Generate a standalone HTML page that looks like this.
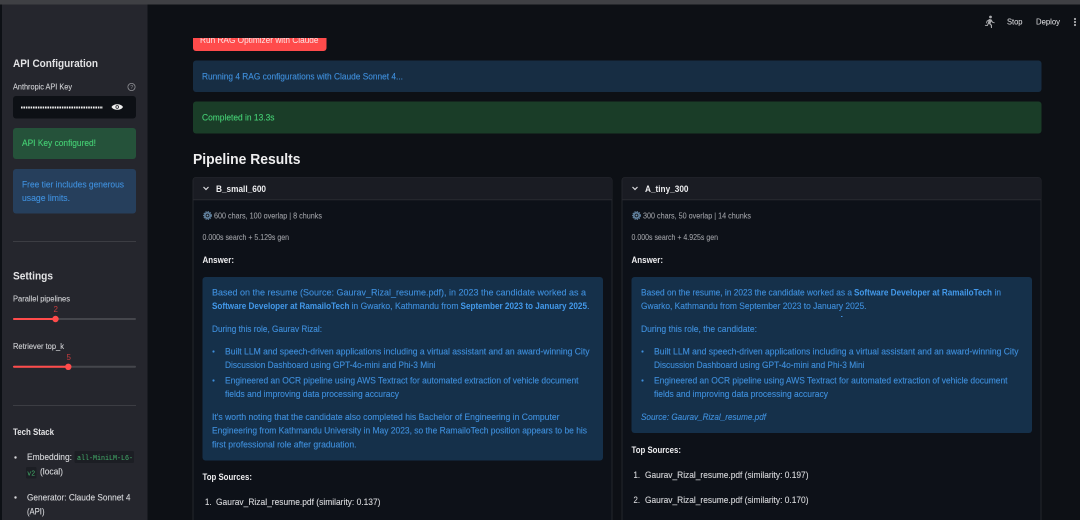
<!DOCTYPE html>
<html><head><meta charset="utf-8"><style>
html,body{margin:0;padding:0;width:1080px;height:520px;overflow:hidden;background:#0d1015}
svg{display:block;filter:blur(.3px)}
text{font-family:"Liberation Sans",sans-serif;font-size:9.1px;white-space:pre}
.b{font-weight:700}
.blue{fill:#3f8fdc;stroke:#3f8fdc;stroke-width:.12}
.blueb{fill:#4399ea;font-weight:700}
.t{fill:#d8d9dc;stroke:#d8d9dc;stroke-width:.1}
.s{fill:#a2a4a9;font-size:8.2px;stroke:#a2a4a9;stroke-width:.06}
.w{fill:#ececee;font-weight:700}
.side{fill:#d4d5d8;font-size:8.4px;stroke:#d4d5d8;stroke-width:.08}
.g{fill:#45cf74;stroke:#45cf74;stroke-width:.12}
</style></head><body>
<svg width="1080" height="520" viewBox="0 0 1080 520" xmlns="http://www.w3.org/2000/svg">
<rect width="1080" height="520" fill="#0d1015"/>
<rect x="2" y="4" width="145.500" height="516" fill="#25262d"/>
<rect x="0" y="0" width="1080" height="4.500" fill="#3f4044"/>

<!-- top right -->
<g fill="#a9aaad">
<circle cx="990.500" cy="17" r="1.400"/>
<path d="M989.500 19l2 .5 1.500 2.500 1.800.5-.2.8-2.300-.5-1-1.300-.8 2 1.500 1.500V28h-1l-.3-2.800-2-1.500-1 2.300-2.800-.2.100-.9 2.100.1 1.400-4-1.200.6-.5 1.800-.8-.2.600-2.300z"/>
<circle cx="1075" cy="19" r="1.100"/><circle cx="1075" cy="22" r="1.100"/><circle cx="1075" cy="25" r="1.100"/>
</g>
<text x="1007" y="24.500" class="side" textLength="15.500" lengthAdjust="spacingAndGlyphs">Stop</text>
<text x="1036" y="24.500" class="side" textLength="24" lengthAdjust="spacingAndGlyphs">Deploy</text>

<!-- main top -->
<path d="M193 38H326.500V48a3 3 0 0 1-3 3H196a3 3 0 0 1-3-3z" fill="#ff4b4b"/>
<clipPath id="c"><rect x="193" y="38" width="134" height="14"/></clipPath>
<text x="200" y="43" clip-path="url(#c)" fill="#fbe3e3" textLength="118.500" lengthAdjust="spacingAndGlyphs">Run RAG Optimizer with Claude</text>
<rect x="193" y="60.500" width="848.500" height="31.500" rx="3" fill="#172d43"/>
<text x="202" y="79.300" class="blue" textLength="201" lengthAdjust="spacingAndGlyphs">Running 4 RAG configurations with Claude Sonnet 4...</text>
<rect x="193" y="101.500" width="848.500" height="32" rx="3" fill="#1a3d28"/>
<text x="202" y="120.300" class="g" textLength="72.500" lengthAdjust="spacingAndGlyphs">Completed in 13.3s</text>
<text x="193" y="164" fill="#eeeeef" class="b" style="font-size:15px" textLength="107.500" lengthAdjust="spacingAndGlyphs">Pipeline Results</text>

<!-- sidebar -->
<text x="13" y="67" class="b" fill="#e3e3e5" style="font-size:11.200px" textLength="85" lengthAdjust="spacingAndGlyphs">API Configuration</text>
<text x="13" y="89.500" class="side" textLength="59" lengthAdjust="spacingAndGlyphs">Anthropic API Key</text>
<circle cx="131.500" cy="87" r="3.600" fill="none" stroke="#8f9095" stroke-width=".8"/>
<text x="130.200" y="89.200" fill="#8f9095" style="font-size:5.500px">?</text>
<rect x="13" y="96" width="123" height="22.500" rx="3" fill="#0d1015"/>
<line x1="21" y1="107.500" x2="103" y2="107.500" stroke="#f0f0f0" stroke-width="1.900" stroke-dasharray="1.600 .8"/>
<path d="M111.500 107c2-3.700 9.500-3.700 11.500 0-2 3.700-9.500 3.700-11.500 0z" fill="#eee"/>
<circle cx="117.200" cy="107" r="1.700" fill="#0d1015"/><circle cx="117.200" cy="107" r="1" fill="#eee"/>
<rect x="13" y="128" width="123" height="31" rx="3" fill="#25523a"/>
<text x="22" y="146" class="g" textLength="74" lengthAdjust="spacingAndGlyphs">API Key configured!</text>
<rect x="13" y="169" width="123" height="44.500" rx="3" fill="#263f5c"/>
<text x="22" y="187.500" class="blue" textLength="102" lengthAdjust="spacingAndGlyphs">Free tier includes generous</text>
<text x="22" y="201" class="blue" textLength="48" lengthAdjust="spacingAndGlyphs">usage limits.</text>
<line x1="13" y1="241.500" x2="136" y2="241.500" stroke="#3c3d43"/>
<text x="13" y="279.500" class="b" fill="#e3e3e5" style="font-size:11.200px" textLength="40" lengthAdjust="spacingAndGlyphs">Settings</text>
<text x="13" y="301.500" class="side" textLength="57" lengthAdjust="spacingAndGlyphs">Parallel pipelines</text>
<text x="53.500" y="312" fill="#c73c3e" style="font-size:8px">2</text>
<rect x="13" y="318" width="123" height="2" rx="1" fill="#45464c"/>
<rect x="13" y="318" width="42" height="2" rx="1" fill="#ff4b4b"/>
<circle cx="55.500" cy="319" r="3.200" fill="#ff4b4b"/>
<text x="13" y="349" class="side" textLength="51" lengthAdjust="spacingAndGlyphs">Retriever top_k</text>
<text x="66.500" y="360" fill="#c73c3e" style="font-size:8px">5</text>
<rect x="13" y="365.800" width="123" height="2" rx="1" fill="#45464c"/>
<rect x="13" y="365.800" width="55" height="2" rx="1" fill="#ff4b4b"/>
<circle cx="68.300" cy="366.800" r="3.200" fill="#ff4b4b"/>
<line x1="13" y1="405.500" x2="136" y2="405.500" stroke="#3c3d43"/>
<text x="13" y="435" class="b" fill="#e3e3e5" textLength="41" lengthAdjust="spacingAndGlyphs">Tech Stack</text>
<circle cx="15.500" cy="457.500" r="1.200" fill="#d8d8da"/>
<text x="27" y="460" class="t" textLength="45" lengthAdjust="spacingAndGlyphs">Embedding:</text>
<rect x="74.500" y="451" width="59.500" height="12" rx="1.500" fill="#1c1e24"/>
<text x="77" y="460" fill="#45b56d" style="font-family:'Liberation Mono',monospace;font-size:7.500px" textLength="56" lengthAdjust="spacingAndGlyphs">all-MiniLM-L6-</text>
<rect x="26" y="467" width="10.500" height="11.500" rx="1.500" fill="#1c1e24"/>
<text x="27.300" y="475.500" fill="#45b56d" style="font-family:'Liberation Mono',monospace;font-size:7.500px" textLength="7.800" lengthAdjust="spacingAndGlyphs">v2</text>
<text x="40" y="474.500" class="t" textLength="23" lengthAdjust="spacingAndGlyphs">(local)</text>
<circle cx="15.500" cy="497.500" r="1.200" fill="#d8d8da"/>
<text x="27" y="500.500" class="t" textLength="103.500" lengthAdjust="spacingAndGlyphs">Generator: Claude Sonnet 4</text>
<text x="27" y="514.500" class="t" textLength="17.500" lengthAdjust="spacingAndGlyphs">(API)</text>

<!-- left expander -->
<path d="M193 520V180.500a3 3 0 0 1 3-3H609a3 3 0 0 1 3 3V520" fill="#0d1118" stroke="#24262c" stroke-width="1"/>
<path d="M193.500 199.500V180.500a3 3 0 0 1 3-3H609a3 3 0 0 1 3 3V199.500z" fill="#1a1c23"/>
<line x1="193" y1="199.700" x2="612" y2="199.700" stroke="#292b31"/>
<path d="M203.500 187l2.500 2.500 2.500-2.500" fill="none" stroke="#dcdcdf" stroke-width="1.200"/>
<text x="216" y="191.800" class="w" style="font-size:8.800px" textLength="50" lengthAdjust="spacingAndGlyphs">B_small_600</text>
<g transform="translate(207.500,215.500)"><circle r="2.700" fill="none" stroke="#5f7f9c" stroke-width="1.700"/><circle r="3.900" fill="none" stroke="#5f7f9c" stroke-width="1.100" stroke-dasharray="1.300 1"/><circle r="1" fill="#7d9ab3"/></g>
<text x="214" y="218.500" class="s" textLength="108" lengthAdjust="spacingAndGlyphs">600 chars, 100 overlap | 8 chunks</text>
<text x="202.500" y="240" class="s" textLength="86.500" lengthAdjust="spacingAndGlyphs">0.000s search + 5.129s gen</text>
<text x="202.500" y="263" class="w" textLength="31.500" lengthAdjust="spacingAndGlyphs">Answer:</text>
<rect x="202.500" y="277" width="400.500" height="183.500" rx="3" fill="#15304a"/>
<text x="212" y="295.300" class="blue" textLength="374" lengthAdjust="spacingAndGlyphs">Based on the resume (Source: Gaurav_Rizal_resume.pdf), in 2023 the candidate worked as a</text>
<text x="212" y="309" class="blueb" textLength="137.500" lengthAdjust="spacingAndGlyphs">Software Developer at RamailoTech</text>
<text x="351.500" y="309" class="blue" textLength="107" lengthAdjust="spacingAndGlyphs">in Gwarko, Kathmandu from</text>
<text x="460.500" y="309" class="blueb" textLength="126.500" lengthAdjust="spacingAndGlyphs">September 2023 to January 2025</text>
<text x="587" y="309" class="blue">.</text>
<text x="212" y="331.800" class="blue" textLength="110" lengthAdjust="spacingAndGlyphs">During this role, Gaurav Rizal:</text>
<circle cx="213.500" cy="351.500" r="1.100" fill="#3f8fdc"/>
<text x="225" y="354.300" class="blue" textLength="364.500" lengthAdjust="spacingAndGlyphs">Built LLM and speech-driven applications including a virtual assistant and an award-winning City</text>
<text x="225" y="368" class="blue" textLength="210.500" lengthAdjust="spacingAndGlyphs">Discussion Dashboard using GPT-4o-mini and Phi-3 Mini</text>
<circle cx="213.500" cy="380.500" r="1.100" fill="#3f8fdc"/>
<text x="225" y="383.300" class="blue" textLength="353.500" lengthAdjust="spacingAndGlyphs">Engineered an OCR pipeline using AWS Textract for automated extraction of vehicle document</text>
<text x="225" y="397" class="blue" textLength="174" lengthAdjust="spacingAndGlyphs">fields and improving data processing accuracy</text>
<text x="212" y="420" class="blue" textLength="347.500" lengthAdjust="spacingAndGlyphs">It's worth noting that the candidate also completed his Bachelor of Engineering in Computer</text>
<text x="212" y="433.700" class="blue" textLength="375" lengthAdjust="spacingAndGlyphs">Engineering from Kathmandu University in May 2023, so the RamailoTech position appears to be his</text>
<text x="212" y="447.300" class="blue" textLength="144.500" lengthAdjust="spacingAndGlyphs">first professional role after graduation.</text>
<text x="202.500" y="479.800" class="w" textLength="49.500" lengthAdjust="spacingAndGlyphs">Top Sources:</text>
<text x="205" y="505" class="t" textLength="6.500" lengthAdjust="spacingAndGlyphs">1.</text>
<text x="216" y="505" class="t" textLength="164.500" lengthAdjust="spacingAndGlyphs">Gaurav_Rizal_resume.pdf (similarity: 0.137)</text>

<!-- right expander -->
<path d="M622 520V180.500a3 3 0 0 1 3-3H1038a3 3 0 0 1 3 3V520" fill="#0d1118" stroke="#24262c" stroke-width="1"/>
<path d="M622.500 199.500V180.500a3 3 0 0 1 3-3H1038a3 3 0 0 1 3 3V199.500z" fill="#1a1c23"/>
<line x1="622" y1="199.700" x2="1041" y2="199.700" stroke="#292b31"/>
<path d="M632.500 187l2.500 2.500 2.500-2.500" fill="none" stroke="#dcdcdf" stroke-width="1.200"/>
<text x="645" y="191.800" class="w" style="font-size:8.800px" textLength="43.500" lengthAdjust="spacingAndGlyphs">A_tiny_300</text>
<g transform="translate(636.500,215.500)"><circle r="2.700" fill="none" stroke="#5f7f9c" stroke-width="1.700"/><circle r="3.900" fill="none" stroke="#5f7f9c" stroke-width="1.100" stroke-dasharray="1.300 1"/><circle r="1" fill="#7d9ab3"/></g>
<text x="643" y="218.500" class="s" textLength="108" lengthAdjust="spacingAndGlyphs">300 chars, 50 overlap | 14 chunks</text>
<text x="631.500" y="240" class="s" textLength="86.500" lengthAdjust="spacingAndGlyphs">0.000s search + 4.925s gen</text>
<text x="631.500" y="263" class="w" textLength="31.500" lengthAdjust="spacingAndGlyphs">Answer:</text>
<rect x="631.500" y="277" width="400.500" height="156" rx="3" fill="#15304a"/>
<text x="641" y="295.300" class="blue" textLength="211" lengthAdjust="spacingAndGlyphs">Based on the resume, in 2023 the candidate worked as a</text>
<text x="854" y="295.300" class="blueb" textLength="138" lengthAdjust="spacingAndGlyphs">Software Developer at RamailoTech</text>
<text x="994.500" y="295.300" class="blue" textLength="6.500" lengthAdjust="spacingAndGlyphs">in</text>
<text x="641" y="309" class="blue" textLength="225.500" lengthAdjust="spacingAndGlyphs">Gwarko, Kathmandu from September 2023 to January 2025.</text>
<rect x="841" y="316" width="1.500" height="1" fill="#3f8fdc"/>
<text x="641" y="331.800" class="blue" textLength="116" lengthAdjust="spacingAndGlyphs">During this role, the candidate:</text>
<circle cx="642.500" cy="351.500" r="1.100" fill="#3f8fdc"/>
<text x="654" y="354.300" class="blue" textLength="364.500" lengthAdjust="spacingAndGlyphs">Built LLM and speech-driven applications including a virtual assistant and an award-winning City</text>
<text x="654" y="368" class="blue" textLength="210.500" lengthAdjust="spacingAndGlyphs">Discussion Dashboard using GPT-4o-mini and Phi-3 Mini</text>
<circle cx="642.500" cy="380.500" r="1.100" fill="#3f8fdc"/>
<text x="654" y="383.300" class="blue" textLength="353.500" lengthAdjust="spacingAndGlyphs">Engineered an OCR pipeline using AWS Textract for automated extraction of vehicle document</text>
<text x="654" y="397" class="blue" textLength="174" lengthAdjust="spacingAndGlyphs">fields and improving data processing accuracy</text>
<text x="641" y="420" class="blue" font-style="italic" textLength="125" lengthAdjust="spacingAndGlyphs">Source: Gaurav_Rizal_resume.pdf</text>
<text x="631.500" y="452.800" class="w" textLength="49.500" lengthAdjust="spacingAndGlyphs">Top Sources:</text>
<text x="633.500" y="478" class="t" textLength="6.500" lengthAdjust="spacingAndGlyphs">1.</text>
<text x="645" y="478" class="t" textLength="163.500" lengthAdjust="spacingAndGlyphs">Gaurav_Rizal_resume.pdf (similarity: 0.197)</text>
<text x="633.500" y="503" class="t" textLength="6.500" lengthAdjust="spacingAndGlyphs">2.</text>
<text x="645" y="503" class="t" textLength="163.500" lengthAdjust="spacingAndGlyphs">Gaurav_Rizal_resume.pdf (similarity: 0.170)</text>
</svg>
</body></html>
